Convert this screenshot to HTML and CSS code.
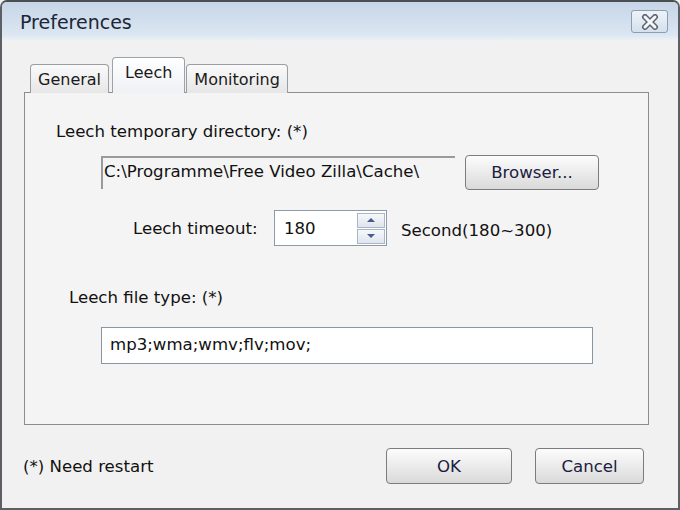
FILE: index.html
```html
<!DOCTYPE html>
<html lang="en">
<head>
  <meta charset="UTF-8" />
  <title>Preferences</title>
  <link rel="stylesheet" href="styles.css">
</head>
<body>
  <div class="window">
    <div class="titlebar">
      <span class="title">Preferences</span>
      <button class="close" aria-label="Close">
        <svg width="22" height="16" viewBox="0 0 22 16">
          <path d="M6 3 L16 13 M16 3 L6 13" stroke="#5a6470" stroke-width="6" stroke-linecap="round" fill="none"/>
          <path d="M6 3 L16 13 M16 3 L6 13" stroke="#f4f6f8" stroke-width="3" stroke-linecap="round" fill="none"/>
        </svg>
      </button>
    </div>

    <div class="content">
      <div class="tabs">
        <div class="tab">General</div>
        <div class="tab active">Leech</div>
        <div class="tab">Monitoring</div>
      </div>

      <div class="panel">
        <div class="label first">Leech temporary directory: (*)</div>
        <div class="dir-row">
          <div class="path">C:\Programme\Free Video Zilla\Cache\</div>
          <button class="btn browse">Browser...</button>
        </div>

        <div class="timeout-row">
          <span class="timeout-label">Leech timeout:</span>
          <div class="spin">
            <span class="spin-value">180</span>
            <div class="spin-buttons">
              <div class="spin-btn"><span class="arrow up"></span></div>
              <div class="spin-btn"><span class="arrow down"></span></div>
            </div>
          </div>
          <span class="unit">Second(180~300)</span>
        </div>

        <div class="label filetype">Leech file type: (*)</div>
        <div class="textbox">mp3;wma;wmv;flv;mov;</div>
      </div>

      <div class="footer">
        <span class="note">(*) Need restart</span>
        <div class="actions">
          <button class="btn ok">OK</button>
          <button class="btn cancel">Cancel</button>
        </div>
      </div>
    </div>
  </div>
</body>
</html>
```

FILE: styles.css
```css
body { margin: 0; background: #f0f0f0; font-family: "DejaVu Sans", Tahoma, sans-serif; color: #111; }
.window { width: 680px; height: 510px; box-sizing: border-box; border: 2px solid #5c5f63; border-top-color: #4a4d52; border-radius: 7px 7px 0 0; background: #f1f1f1; overflow: hidden; }

.titlebar { height: 38px; display: flex; align-items: center; justify-content: space-between; padding: 0 10px 0 18px; background: linear-gradient(#c6d5e6, #dbe6f2 85%, #eaf0f6); }
.title { font-size: 19px; color: #1c2636; margin-top: 2px; }
.close { width: 37px; height: 23px; margin-top: 1px; padding: 0; border: 1px solid #8a9db3; border-radius: 3px; background: linear-gradient(#eef3f9, #d5e0ec); display: flex; align-items: center; justify-content: center; }

.content { padding: 17px 0 0 22px; }

.tabs { display: flex; align-items: flex-end; height: 36px; padding-left: 6px; margin-bottom: -1px; position: relative; z-index: 1; }
.tab { height: 29px; box-sizing: border-box; padding: 5px 7px 0 7px; font-size: 16px; border: 1px solid #9a9ea4; border-bottom: none; border-radius: 4px 4px 0 0; background: linear-gradient(#fafafa, #e6e6e6); margin-right: 1px; color: #1a1a1a; }
.tab.active { height: 36px; padding: 5px 12px 0 12px; margin: 0 1px 0 2px; background: linear-gradient(#ffffff, #eef1f5); border-color: #9aa2ab; }

.panel { width: 625px; height: 333px; box-sizing: border-box; border: 1px solid #8b8d91; background: #f4f4f4; padding: 29px 0 0 31px; font-size: 16.6px; }
.label { line-height: 20px; }
.dir-row { display: flex; align-items: center; margin: 13px 0 0 45px; }
.path { width: 354px; height: 33px; box-sizing: border-box; border-top: 2px solid #9a9a9a; border-left: 2px solid #9a9a9a; padding: 4px 0 0 1px; white-space: nowrap; }
.btn { font-family: inherit; font-size: 16.6px; color: #1b2040; border: 1px solid #7a7c80; border-radius: 4px; background: linear-gradient(#fcfcfc, #ededed 45%, #d9d9d9); padding: 0; }
.browse { width: 134px; height: 35px; margin-left: 10px; }

.timeout-row { display: flex; align-items: center; margin: 20px 0 0 77px; }
.timeout-label { width: 141px; }
.spin { width: 113px; height: 36px; box-sizing: border-box; border: 1px solid #8d9aac; background: #fff; display: flex; align-items: center; justify-content: space-between; }
.spin-value { padding-left: 9px; }
.spin-buttons { display: flex; flex-direction: column; gap: 1px; margin-right: 1px; }
.spin-btn { width: 28px; height: 15px; box-sizing: border-box; border: 1px solid #aab5c6; background: linear-gradient(#f6f8fb, #dfe5ee); display: flex; align-items: center; justify-content: center; }
.arrow { width: 0; height: 0; border-left: 4px solid transparent; border-right: 4px solid transparent; }
.arrow.up { border-bottom: 4px solid #4b5a8c; }
.arrow.down { border-top: 4px solid #4b5a8c; }
.unit { margin-left: 14px; margin-top: 4px; }

.filetype { margin: 42px 0 0 13px; }
.textbox { width: 492px; height: 37px; box-sizing: border-box; margin: 19px 0 0 45px; border: 1px solid #8a95a4; background: #fff; padding: 7px 0 0 8px; }

.footer { display: flex; justify-content: space-between; align-items: center; width: 620px; padding-top: 23px; font-size: 16.6px; }
.note { margin-left: -1px; margin-top: 0; }
.actions { display: flex; gap: 23px; }
.ok { width: 126px; height: 36px; }
.cancel { width: 109px; height: 36px; }
```
